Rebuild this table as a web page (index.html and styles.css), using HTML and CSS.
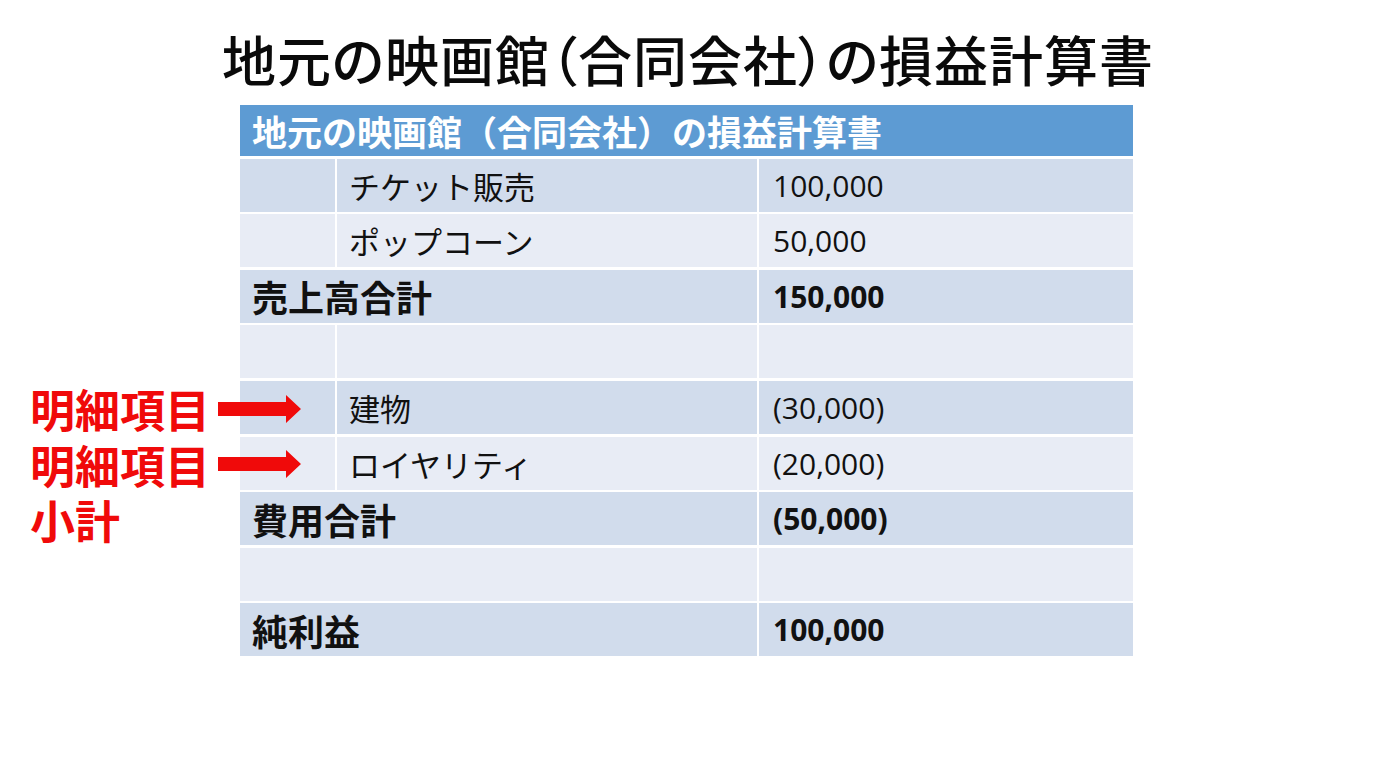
FILE: index.html
```html
<!DOCTYPE html>
<html lang="ja">
<head>
<meta charset="utf-8">
<title>地元の映画館（合同会社）の損益計算書</title>
<link rel="stylesheet" href="styles.css">
</head>
<body>
<h1 class="title">地元の映画館（合同会社）の損益計算書</h1>
<div class="stage">
  <div class="notes">
    <div class="note">
      <span class="note-text">明細項目</span>
      <svg class="arrow" width="84" height="30" viewBox="0 0 84 30"><polygon points="0,8 68,8 68,1 83,15 68,29 68,22 0,22" fill="#f00a0a"/></svg>
    </div>
    <div class="note">
      <span class="note-text">明細項目</span>
      <svg class="arrow" width="84" height="30" viewBox="0 0 84 30"><polygon points="0,8 68,8 68,1 83,15 68,29 68,22 0,22" fill="#f00a0a"/></svg>
    </div>
    <div class="note">
      <span class="note-text">小計</span>
    </div>
  </div>
  <div class="sheet">
    <div class="cell head span3">地元の映画館（合同会社）の損益計算書</div>

    <div class="cell dark"></div>
    <div class="cell dark item">チケット販売</div>
    <div class="cell dark num">100,000</div>

    <div class="cell light"></div>
    <div class="cell light item">ポップコーン</div>
    <div class="cell light num">50,000</div>

    <div class="cell dark span2 total">売上高合計</div>
    <div class="cell dark num bold">150,000</div>

    <div class="cell light"></div>
    <div class="cell light"></div>
    <div class="cell light"></div>

    <div class="cell dark"></div>
    <div class="cell dark item">建物</div>
    <div class="cell dark num">(30,000)</div>

    <div class="cell light"></div>
    <div class="cell light item">ロイヤリティ</div>
    <div class="cell light num">(20,000)</div>

    <div class="cell dark span2 total">費用合計</div>
    <div class="cell dark num bold">(50,000)</div>

    <div class="cell light span2"></div>
    <div class="cell light"></div>

    <div class="cell dark span2 total">純利益</div>
    <div class="cell dark num bold">100,000</div>
  </div>
</div>
</body>
</html>
```

FILE: styles.css
```css
html, body {
  margin: 0;
  padding: 0;
  background: #ffffff;
}
body {
  width: 1376px;
  height: 768px;
  overflow: hidden;
  font-family: "Noto Sans CJK JP", "Noto Sans", sans-serif;
  color: #111;
}
.title {
  margin: 0;
  padding-top: 26px;
  height: 66px;
  line-height: 66px;
  text-align: center;
  font-size: 54px;
  font-weight: 500;
  letter-spacing: 1px;
  font-feature-settings: "palt" 1;
  color: #0a0a0a;
}
.stage {
  position: relative;
  margin-top: 13px;
  padding-left: 240px;
}
.sheet {
  width: 893px;
  display: grid;
  grid-template-columns: 95px 420px 1fr;
  grid-template-rows: 51px repeat(9, 53px);
  column-gap: 2px;
  row-gap: 2.6px;
}
.cell {
  display: flex;
  align-items: center;
  box-sizing: border-box;
}
.span3 { grid-column: 1 / 4; }
.span2 { grid-column: 1 / 3; }
.head {
  background: #5d9bd3;
  color: #ffffff;
  font-weight: 700;
  font-size: 35px;
  padding-left: 12px;
}
.dark { background: #d1dcec; }
.light { background: #e8ecf5; }
.item {
  padding-left: 12px;
  font-size: 31px;
  font-weight: 400;
  color: #111;
}
.total {
  padding-left: 12px;
  font-size: 36px;
  font-weight: 700;
  color: #111;
}
.num {
  padding-left: 14px;
  font-family: "Open Sans", "Noto Sans", sans-serif;
  font-size: 30px;
  color: #111;
}
.bold { font-weight: 700; }
.notes {
  position: absolute;
  left: 30px;
  top: 276px;
  display: flex;
  flex-direction: column;
}
.note {
  display: flex;
  align-items: center;
  height: 55.6px;
}
.note-text {
  font-size: 45px;
  line-height: 1;
  font-weight: 700;
  color: #f00a0a;
  width: 188px;
}
.arrow {
  display: block;
}
```
